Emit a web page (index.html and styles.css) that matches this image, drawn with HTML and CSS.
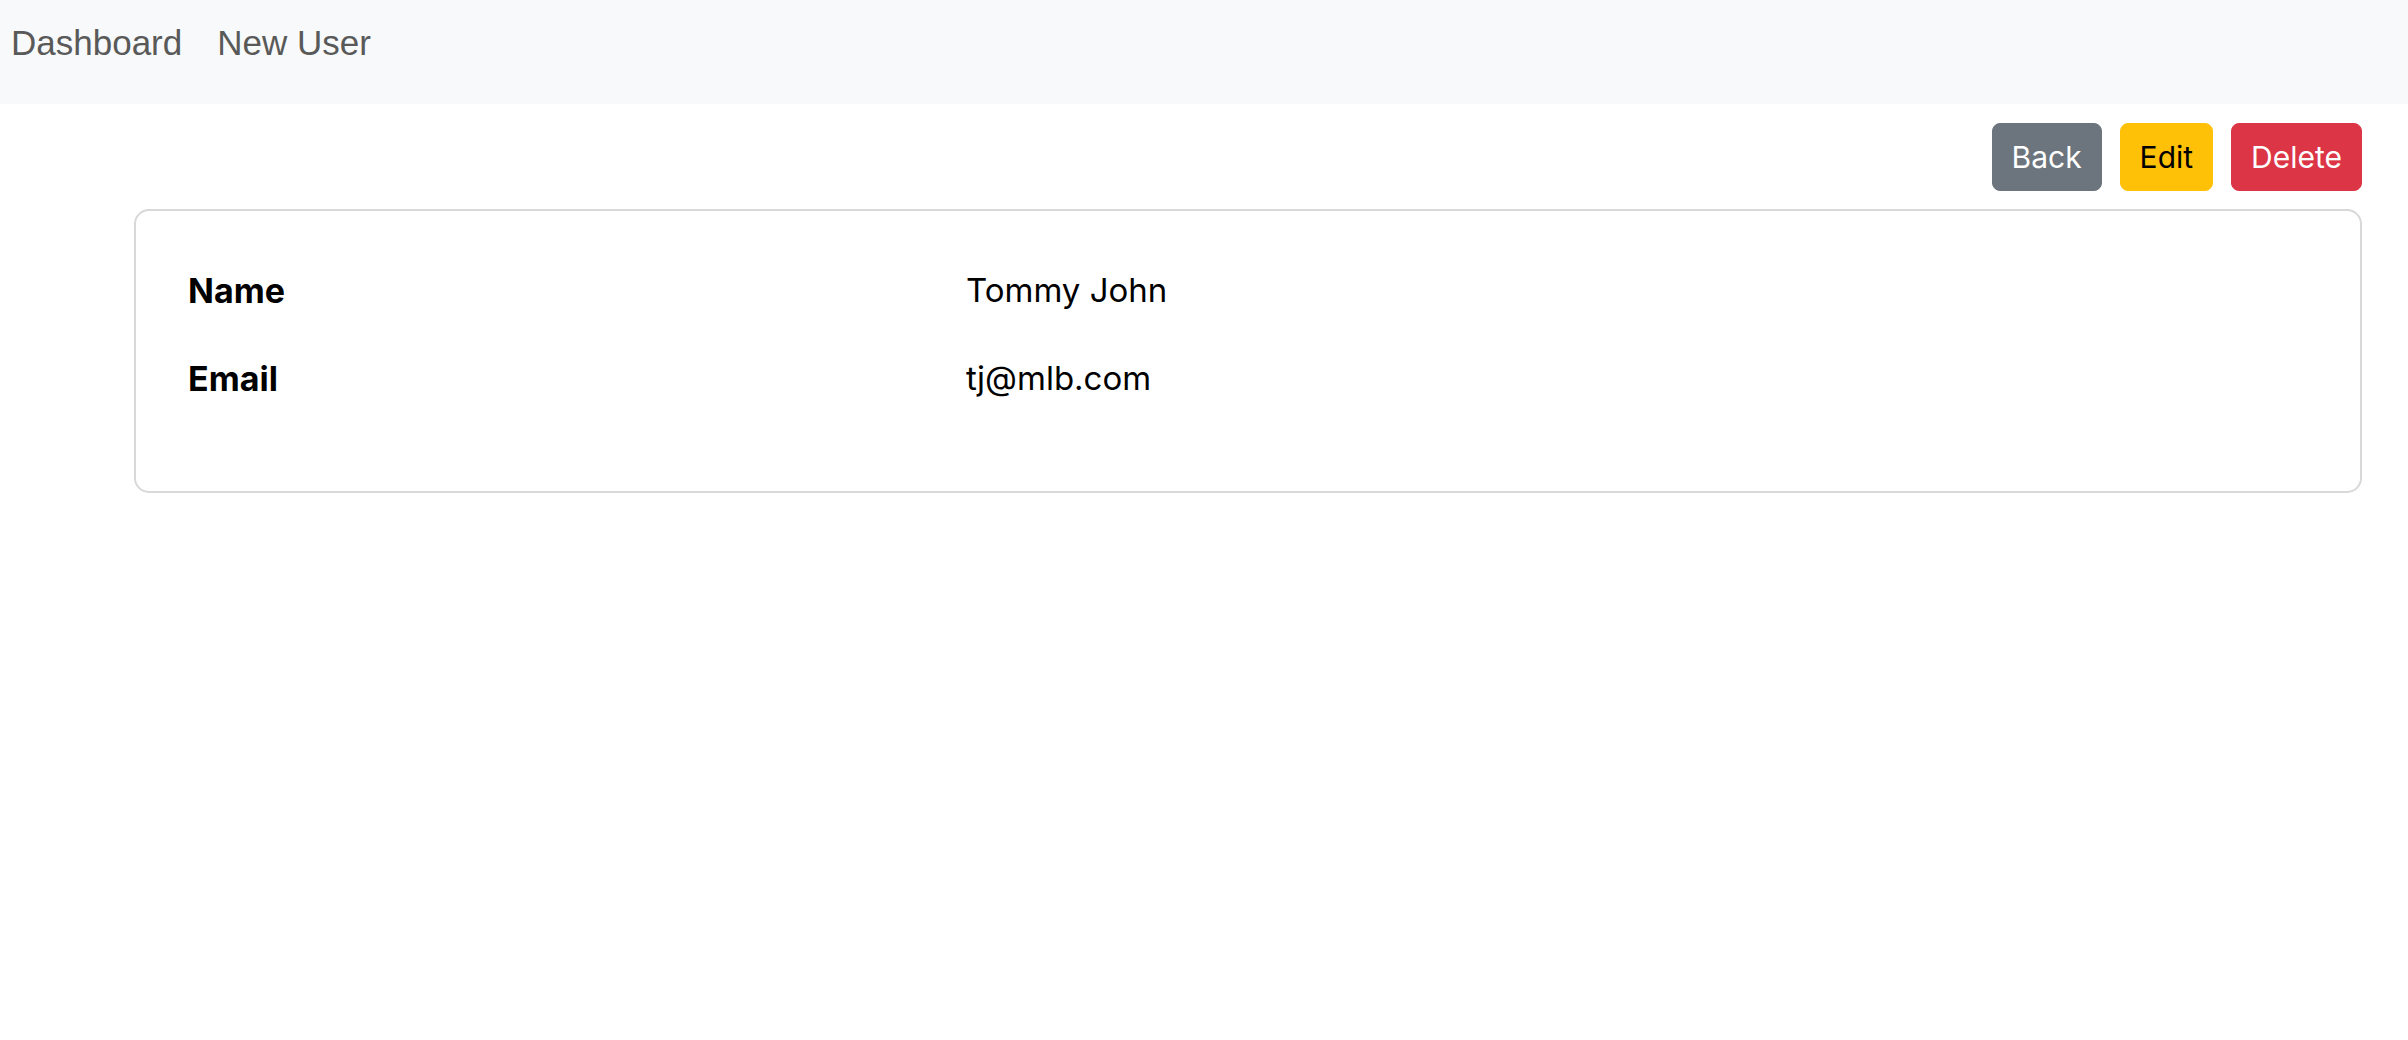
FILE: index.html
```html
<!DOCTYPE html>
<html lang="en">
<head>
<meta charset="utf-8">
<title>User</title>
<link rel="stylesheet" href="styles.css">
</head>
<body>
<nav class="navbar">
  <a class="nav-link" href="#">Dashboard</a>
  <a class="nav-link" href="#">New User</a>
</nav>
<div class="toolbar">
  <a class="btn btn-secondary" href="#">Back</a>
  <a class="btn btn-warning" href="#">Edit</a>
  <a class="btn btn-danger" href="#">Delete</a>
</div>
<div class="card">
  <dl class="details">
    <dt>Name</dt>
    <dd>Tommy John</dd>
    <dt>Email</dt>
    <dd>tj@mlb.com</dd>
  </dl>
</div>
</body>
</html>
```

FILE: styles.css
```css
html, body {
  margin: 0;
  padding: 0;
  background: #ffffff;
  font-family: Inter, "Liberation Sans", Arial, sans-serif;
  color: #000;
}

.navbar {
  display: flex;
  align-items: center;
  gap: 35px;
  height: 104px;
  box-sizing: border-box;
  padding: 16px 0 34px 11px;
  background: #f8f9fa;
}

.nav-link {
  font-family: "Liberation Sans", Arial, sans-serif;
  font-size: 35px;
  line-height: 54px;
  color: #595959;
  text-decoration: none;
}

.toolbar {
  display: flex;
  justify-content: flex-end;
  gap: 18px;
  margin: 19px 46px 18px 0;
}

.btn {
  display: inline-block;
  font-size: 30px;
  line-height: 46px;
  padding: 10px 19px;
  border: 1px solid transparent;
  border-radius: 8px;
  text-decoration: none;
  color: #fff;
}

.btn-secondary {
  background: #6c757d;
  border-color: #6c757d;
}

.btn-warning {
  background: #ffc107;
  border-color: #ffc107;
  color: #000;
}

.btn-danger {
  background: #dc3545;
  border-color: #dc3545;
}

.card {
  margin: 0 46px 0 134px;
  border: 2px solid #d8d8d8;
  border-radius: 15px;
  padding: 54px 52px 50px;
}

.details {
  display: grid;
  grid-template-columns: 778px 1fr;
  margin: 0;
}

.details dt,
.details dd {
  margin: 0 0 37px 0;
  font-size: 33px;
  line-height: 51px;
}

.details dt {
  font-size: 34px;
  font-weight: 700;
}
```
